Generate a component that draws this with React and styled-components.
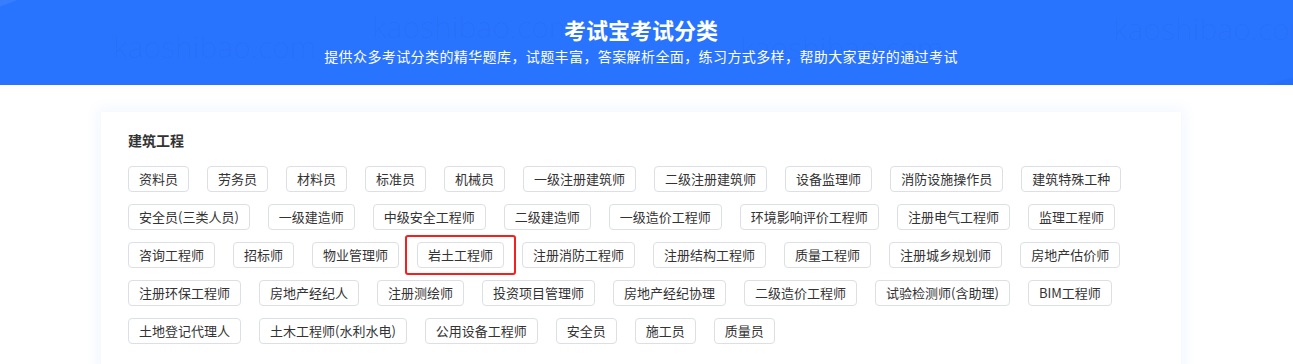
import React from "react"
import styled, { createGlobalStyle } from "styled-components"

const categories = [
  {
    title: "建筑工程",
    items: [
      "资料员", "劳务员", "材料员", "标准员", "机械员", "一级注册建筑师", "二级注册建筑师",
      "设备监理师", "消防设施操作员", "建筑特殊工种", "安全员(三类人员)", "一级建造师",
      "中级安全工程师", "二级建造师", "一级造价工程师", "环境影响评价工程师", "注册电气工程师",
      "监理工程师", "咨询工程师", "招标师", "物业管理师", "岩土工程师", "注册消防工程师",
      "注册结构工程师", "质量工程师", "注册城乡规划师", "房地产估价师", "注册环保工程师",
      "房地产经纪人", "注册测绘师", "投资项目管理师", "房地产经纪协理", "二级造价工程师",
      "试验检测师(含助理)", "BIM工程师", "土地登记代理人", "土木工程师(水利水电)",
      "公用设备工程师", "安全员", "施工员", "质量员",
    ],
  },
]

// faint watermark positions inside the banner
const marks = [
  { x: 113, y: 32 },
  { x: 372, y: 12 },
  { x: 740, y: 33 },
  { x: 1113, y: 14 },
]

const GlobalStyle = createGlobalStyle`
  body {
    margin: 0;
    background: #fff;
    font-family: "Noto Sans CJK SC", "Noto Sans", sans-serif;
  }
`

const App = () => {
  return (
    <>
      <GlobalStyle />
      <Banner>
        <Blob />
        <BlobRight />
        {marks.map((m, i) => (
          <Watermark key={i} style={{ left: m.x, top: m.y }}>
            kaoshibao.com
          </Watermark>
        ))}
        <Title>考试宝考试分类</Title>
        <Subtitle>提供众多考试分类的精华题库，试题丰富，答案解析全面，练习方式多样，帮助大家更好的通过考试</Subtitle>
      </Banner>
      <Main>
        {categories.map((cat) => (
          <Card key={cat.title}>
            <CardTitle>{cat.title}</CardTitle>
            <TagList>
              {cat.items.map((item) => (
                <Tag key={item} marked={item === "岩土工程师"}>
                  {item}
                </Tag>
              ))}
            </TagList>
          </Card>
        ))}
      </Main>
    </>
  )
}

const Banner = styled.div`
  position: relative;
  overflow: hidden;
  height: 85px;
  padding-right: 11px;
  background: #2874fe;
  display: flex;
  flex-direction: column;
  align-items: center;
  color: #fff;
`

const Blob = styled.div`
  position: absolute;
  left: -200px;
  top: -286px;
  width: 305px;
  height: 300px;
  border-radius: 50%;
  background: rgba(255, 255, 255, 0.07);
`

const BlobRight = styled.div`
  position: absolute;
  left: 1170px;
  top: 70px;
  width: 400px;
  height: 200px;
  border-radius: 50%;
  background: rgba(0, 30, 120, 0.035);
`

const Watermark = styled.span`
  position: absolute;
  font-family: "Open Sans", "Liberation Sans", sans-serif;
  font-weight: 300;
  font-size: 30px;
  line-height: 30px;
  color: rgba(20, 50, 150, 0.05);
  white-space: nowrap;
`

const Title = styled.h1`
  position: relative;
  margin: 15px 0 0;
  font-size: 22px;
  line-height: 28px;
  font-weight: bold;
`

const Subtitle = styled.p`
  position: relative;
  margin: 3px 0 0;
  font-size: 14px;
  line-height: 20px;
  letter-spacing: 0.4px;
`

const Main = styled.div`
  padding: 27px 0 20px 101px;
`

const Card = styled.div`
  width: 1080px;
  box-sizing: border-box;
  padding: 17px 27px 30px;
  background: #fff;
  box-shadow: 0 0 12px 4px rgba(40, 116, 254, 0.06);
`

const CardTitle = styled.h2`
  margin: 0;
  font-size: 14px;
  line-height: 22px;
  font-weight: bold;
  color: #333;
`

const TagList = styled.div`
  display: flex;
  flex-wrap: wrap;
  gap: 12px 18px;
  margin-top: 15px;
`

const Tag = styled.span`
  position: relative;
  height: 26px;
  box-sizing: border-box;
  padding: 0 10px;
  border: 1px solid #dcdfe6;
  border-radius: 4px;
  font-size: 13px;
  line-height: 24px;
  color: #333;
  white-space: nowrap;
  cursor: pointer;

  &::after {
    content: "";
    display: ${(props) => (props.marked ? "block" : "none")};
    position: absolute;
    left: -13px;
    right: -13px;
    top: -8px;
    bottom: -8px;
    border: 2px solid #f5201d;
    border-radius: 3px;
  }
`

export default App
